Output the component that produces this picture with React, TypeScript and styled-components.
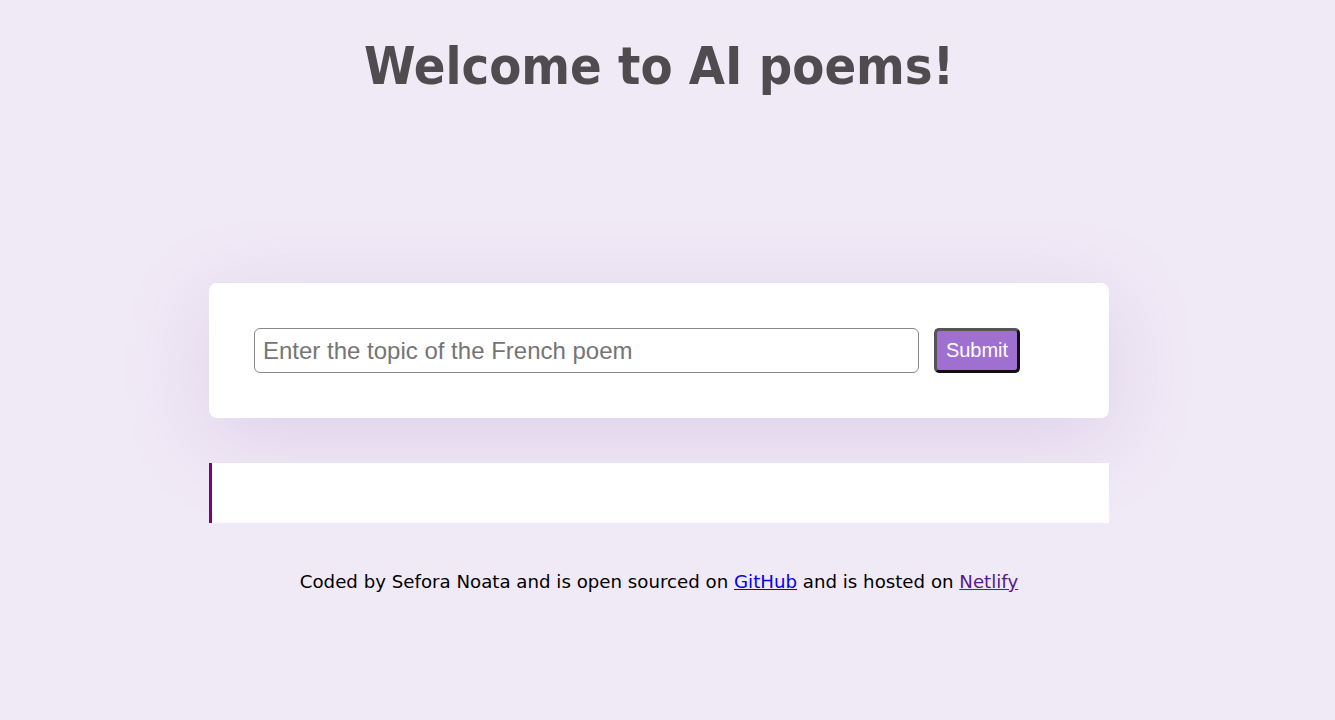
import React from "react";
import styled, { createGlobalStyle } from "styled-components";

const Global = createGlobalStyle`
  html, body { margin: 0; padding: 0; }
  body {
    background: #f0e9f6;
    padding-right: 17px;
    font-family: "Comic Sans MS", "DejaVu Sans", sans-serif;
  }
`;

const Container = styled.div`
  width: 900px;
  margin: 0 auto;
  padding-top: 30px;
`;

const Title = styled.h1`
  margin: 0;
  text-align: center;
  font-family: "Comic Sans MS", "DejaVu Sans Condensed", "DejaVu Sans", sans-serif;
  font-weight: 700;
  font-size: 52px;
  line-height: 72px;
  color: #4f4c50;
`;

const Card = styled.div`
  margin-top: 181px;
  background: #fff;
  border-radius: 8px;
  padding: 45px;
  box-shadow: 0 20px 80px rgba(167, 140, 200, 0.25);
`;

const Form = styled.form`
  display: flex;
  align-items: center;
  gap: 15px;
`;

const Input = styled.input`
  box-sizing: border-box;
  width: 665px;
  height: 45px;
  border: 1px solid #888;
  border-radius: 6px;
  padding: 0 8px;
  font-family: "Liberation Sans", Arial, sans-serif;
  font-size: 24px;
  color: #333;
  outline: none;
  &::placeholder { color: #757575; }
`;

const Button = styled.button`
  box-sizing: border-box;
  height: 45px;
  width: 86px;
  background: #a070d0;
  color: #fff;
  font-family: "Liberation Sans", Arial, sans-serif;
  font-size: 20px;
  border: 3px solid;
  border-color: #555 #111 #111 #555;
  border-radius: 5px;
  padding: 0;
  cursor: pointer;
`;

const Poem = styled.div`
  margin-top: 45px;
  height: 60px;
  background: #fff;
  border-left: 3px solid #800080;
  box-sizing: border-box;
`;

const Footer = styled.footer`
  margin-top: 48px;
  text-align: center;
  font-family: "Comic Sans MS", "DejaVu Sans", sans-serif;
  font-size: 18.2px;
  color: #000;
`;

const Link = styled.a<{ $visited?: boolean }>`
  color: ${(p) => (p.$visited ? "#551a8b" : "#0000ee")};
  text-decoration: underline;
`;

export default function App() {
  return (
    <>
      <Global />
      <Container>
        <Title>Welcome to AI poems!</Title>
        <Card>
          <Form onSubmit={(e) => e.preventDefault()}>
            <Input placeholder="Enter the topic of the French poem" />
            <Button type="submit">Submit</Button>
          </Form>
        </Card>
        <Poem />
        <Footer>
          Coded by Sefora Noata and is open sourced on <Link href="#">GitHub</Link> and is
          hosted on <Link href="#" $visited>Netlify</Link>
        </Footer>
      </Container>
    </>
  );
}
